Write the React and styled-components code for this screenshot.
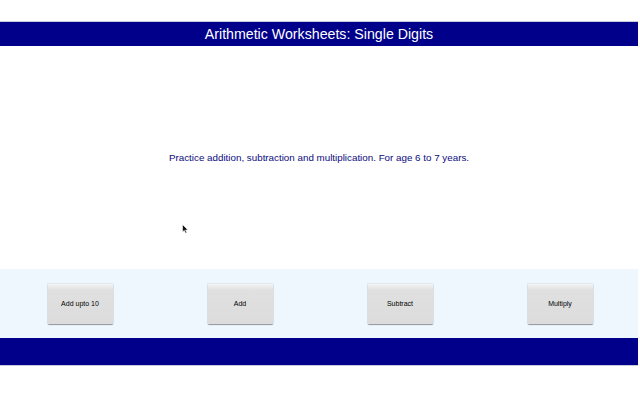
import React from "react";
import styled, { createGlobalStyle } from "styled-components";

const GlobalStyle = createGlobalStyle`
  html, body {
    margin: 0;
    padding: 0;
    background: #ffffff;
    font-family: "Liberation Sans", Arial, sans-serif;
  }
`;

const Page = styled.div`
  position: relative;
  width: 638px;
  padding-top: 21px;
`;

const TitleBar = styled.header`
  height: 24px;
  border-top: 1px solid #c9c9de;
  background: #00008b;
  color: #ffffff;
  font-size: 14.2px;
  line-height: 25px;
  text-align: center;
`;

const Intro = styled.main`
  height: 223px;
  display: flex;
  align-items: center;
  justify-content: center;
  color: #0b0b7e;
  font-size: 9.8px;
`;

const ButtonBand = styled.nav`
  height: 69px;
  background: #eef6fe;
  display: grid;
  grid-template-columns: repeat(4, 160px);
  align-items: center;
  justify-items: center;
`;

const SheetButton = styled.button`
  width: 65px;
  height: 40px;
  padding: 0;
  border: none;
  border-radius: 1px;
  background: linear-gradient(#f4f4f4 0px, #e0e0e0 6px, #dcdcdc 100%);
  box-shadow: 0 1px 1px rgba(0, 0, 0, 0.35), 0 0 0 1px rgba(0, 0, 0, 0.06);
  color: #000000;
  font-family: "Liberation Sans", Arial, sans-serif;
  font-size: 7px;
  cursor: pointer;
`;

const FooterBar = styled.footer`
  height: 27px;
  background: #00008b;
  border-bottom: 1px solid #c9c9de;
`;

const Pointer = styled.svg`
  position: absolute;
  left: 182px;
  top: 224px;
`;

const sheets = ["Add upto 10", "Add", "Subtract", "Multiply"];

export default function App() {
  return (
    <Page>
      <GlobalStyle />
      <TitleBar>Arithmetic Worksheets: Single Digits</TitleBar>
      <Intro>
        Practice addition, subtraction and multiplication. For age 6 to 7 years.
      </Intro>
      <ButtonBand>
        {sheets.map((s) => (
          <SheetButton key={s}>{s}</SheetButton>
        ))}
      </ButtonBand>
      <FooterBar />
      <Pointer width="7" height="10" viewBox="0 0 7 10">
        <path d="M0.5 0.5 L0.5 8 L2.3 6.4 L3.6 9.3 L4.8 8.8 L3.6 6 L6 6 Z" fill="#111" stroke="#fff" strokeWidth="0.6" />
      </Pointer>
    </Page>
  );
}
